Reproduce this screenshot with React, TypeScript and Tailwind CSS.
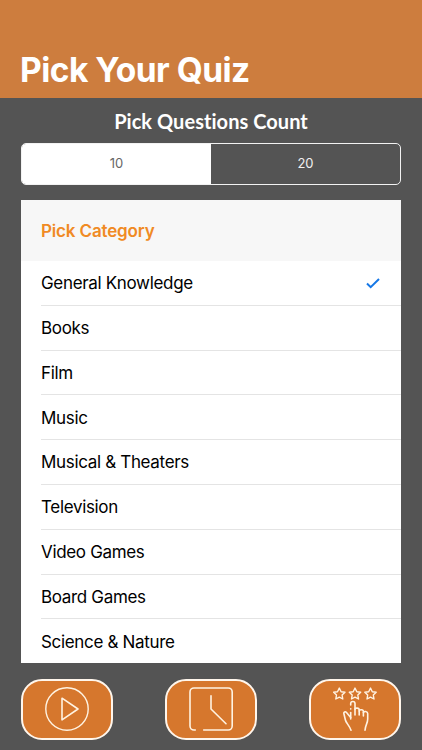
import React, { useState } from 'react';
import clsx from 'clsx';

const QUESTION_COUNTS = [10, 20];

const CATEGORIES = [
  'General Knowledge',
  'Books',
  'Film',
  'Music',
  'Musical & Theaters',
  'Television',
  'Video Games',
  'Board Games',
  'Science & Nature',
];

const STAR_CENTERS = [6.3, 22, 37.5];

interface IconProps {
  children: React.ReactNode;
}

function Icon({ children }: IconProps) {
  return (
    <svg
      width="44"
      height="44"
      viewBox="0 0 44 44"
      fill="none"
      stroke="#fff3e2"
      strokeWidth="1.6"
      strokeLinecap="round"
      strokeLinejoin="round"
      className="shrink-0"
    >
      {children}
    </svg>
  );
}

function PlayIcon() {
  return (
    <Icon>
      <circle cx="22" cy="22" r="21.2" strokeWidth="1.4" />
      <path d="M17 11.2 33 22 17 32.8Z" />
    </Icon>
  );
}

function ClockIcon() {
  return (
    <Icon>
      <path d="M6.3 43H5a4 4 0 0 1-4-4V5a4 4 0 0 1 4-4h34.2a4 4 0 0 1 4 4v34a4 4 0 0 1-4 4H14.7" />
      <path d="M22 8.7V22l15 14.7" />
    </Icon>
  );
}

function RateIcon() {
  return (
    <Icon>
      {STAR_CENTERS.map((x) => (
        <path
          key={x}
          transform={`translate(${x} 6.9)`}
          strokeWidth="1.4"
          d="M0-5.8 1.8-2.2 5.7-1.7 2.8 1.1 3.5 5.1 0 3.2-3.5 5.1-2.8 1.1-5.7-1.7-1.8-2.2Z"
        />
      ))}
      {/* index finger and knuckles */}
      <path d="M17.7 18v-1.4a2.1 2.1 0 0 1 4.3 0V28" />
      <path d="M17.7 21.8v.1" />
      <path d="M17.7 25.5V32" />
      <path d="M22 22.2c0-1.6 4.2-1.6 4.2.8V28" />
      <path d="M26.2 24c.2-1.8 4.2-1.6 4.2.6V29" />
      <path d="M30.4 25.5c.3-1.6 4.3-1.4 4.3 1V32c0 4.500-2.200 5.500-2.700 11.200" />
      {/* thumb and wrist */}
      <path d="M17.7 30.500 13.500 25.500c-1.200-1.400-3-.4-2.600 1.200l1.500 6.300c.7 3 3.800 5.200 5.600 10.200" />
    </Icon>
  );
}

interface ActionButtonProps {
  label: string;
  children: React.ReactNode;
}

function ActionButton({ label, children }: ActionButtonProps) {
  return (
    <button
      aria-label={label}
      className="flex h-[61px] w-[92px] items-center justify-center rounded-[21px] border-2 border-[#fff6ec] bg-[#d6772d]"
    >
      {children}
    </button>
  );
}

export default function App() {
  const [count, setCount] = useState(10);
  const [category, setCategory] = useState('General Knowledge');

  return (
    <div className="flex h-[750px] w-[422px] flex-col overflow-hidden bg-[#545454] font-['Inter',sans-serif]">
      <header className="flex h-[98px] shrink-0 items-end bg-[#cd7d3e] px-5 pb-2">
        <h1 className="text-[33.5px] leading-10 font-bold tracking-[-0.5px] whitespace-nowrap text-white">
          Pick Your Quiz
        </h1>
      </header>

      <main className="flex flex-col px-[21px]">
        <h2 className="mt-[9px] h-7 text-center font-['Lato',sans-serif] text-[20px] leading-7 font-bold tracking-[0.05px] whitespace-nowrap text-white [font-variant-ligatures:none]">
          Pick Questions Count
        </h2>

        <div className="mt-2 flex h-[42px] overflow-hidden rounded-[5px] border border-[#f2f2f2]">
          {QUESTION_COUNTS.map((n) => (
            <button
              key={n}
              onClick={() => setCount(n)}
              className={clsx(
                'flex-1 text-[13px]',
                n === count ? 'bg-white text-[#666666]' : 'text-[#f0f0f0]'
              )}
            >
              {n}
            </button>
          ))}
        </div>

        <section className="mt-[15px] h-[463px] overflow-hidden bg-white">
          <h3 className="flex h-[61px] items-center bg-[#f7f7f7] pt-[2px] pl-5 text-[17px] font-semibold tracking-[-0.15px] text-[#f08a24]">
            Pick Category
          </h3>
          <ul>
            {CATEGORIES.map((name) => (
              <li
                key={name}
                onClick={() => setCategory(name)}
                className="ml-5 flex h-[44.8px] items-center justify-between border-b border-[#e4e4e4] pt-[2px] pr-[21px] text-[17px] tracking-[-0.33px] text-black"
              >
                <span className="whitespace-nowrap">{name}</span>
                {name === category && (
                  <svg width="14" height="11" viewBox="0 0 14 11" fill="none" stroke="#1577e6" strokeWidth="2">
                    <path d="M1 5.500 4.700 9.200 13 1" />
                  </svg>
                )}
              </li>
            ))}
          </ul>
        </section>

        <footer className="mt-[15.5px] flex justify-between">
          <ActionButton label="Play">
            <PlayIcon />
          </ActionButton>
          <ActionButton label="History">
            <ClockIcon />
          </ActionButton>
          <ActionButton label="Rate">
            <RateIcon />
          </ActionButton>
        </footer>
      </main>
    </div>
  );
}
